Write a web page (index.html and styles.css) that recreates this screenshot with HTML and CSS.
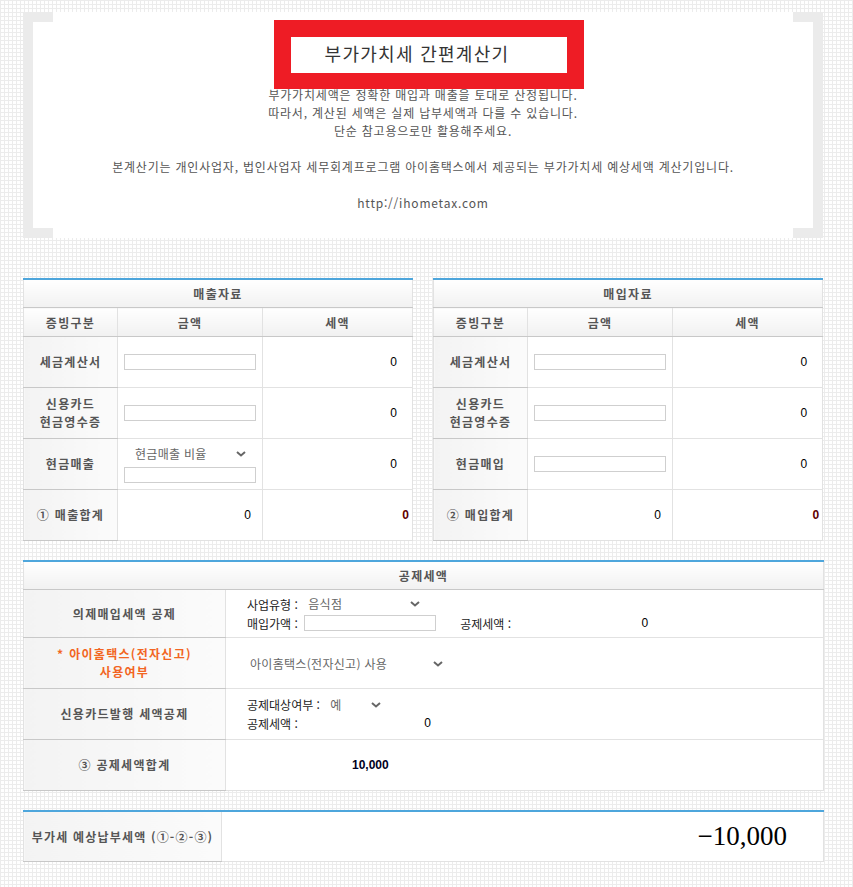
FILE: index.html
```html
<!DOCTYPE html>
<html lang="ko">
<head>
<meta charset="utf-8">
<title>부가가치세 간편계산기</title>
<link rel="stylesheet" href="styles.css">
</head>
<body>
<div class="page">
  <div class="intro">
    <span class="bracket bracket-left"></span>
    <span class="bracket bracket-right"></span>
    <div class="highlight"></div>
    <h1 class="title">부가가치세 간편계산기</h1>
    <p class="desc">부가가치세액은 정확한 매입과 매출을 토대로 산정됩니다.<br>따라서, 계산된 세액은 실제 납부세액과 다를 수 있습니다.<br>단순 참고용으로만 활용해주세요.<br><br>본계산기는 개인사업자, 법인사업자 세무회계프로그램 아이홈택스에서 제공되는 부가가치세 예상세액 계산기입니다.<br><br>http://ihometax.com</p>
  </div>

  <div class="pair">
    <table class="grid">
      <colgroup><col class="c1"><col class="c2"><col class="c3"></colgroup>
      <tr><th colspan="3" class="cap">매출자료</th></tr>
      <tr class="heads"><th>증빙구분</th><th>금액</th><th>세액</th></tr>
      <tr><th class="lab">세금계산서</th><td class="in"><input class="box" type="text"></td><td class="num">0</td></tr>
      <tr><th class="lab">신용카드<br>현금영수증</th><td class="in"><input class="box" type="text"></td><td class="num">0</td></tr>
      <tr><th class="lab">현금매출</th><td class="in"><span class="sel sel-ratio"><select><option>현금매출 비율</option></select><svg class="chev" width="10" height="6" viewBox="0 0 10 6"><path d="M1 1l4 3.5L9 1" fill="none" stroke="#666" stroke-width="2"/></svg></span><input class="box" type="text"></td><td class="num">0</td></tr>
      <tr><th class="lab">① 매출합계</th><td class="num num-sum">0</td><td class="num num-total">0</td></tr>
    </table>

    <table class="grid">
      <colgroup><col class="c1"><col class="c2"><col class="c3"></colgroup>
      <tr><th colspan="3" class="cap">매입자료</th></tr>
      <tr class="heads"><th>증빙구분</th><th>금액</th><th>세액</th></tr>
      <tr><th class="lab">세금계산서</th><td class="in"><input class="box" type="text"></td><td class="num">0</td></tr>
      <tr><th class="lab">신용카드<br>현금영수증</th><td class="in"><input class="box" type="text"></td><td class="num">0</td></tr>
      <tr><th class="lab">현금매입</th><td class="in"><input class="box" type="text"></td><td class="num">0</td></tr>
      <tr><th class="lab">② 매입합계</th><td class="num num-sum">0</td><td class="num num-total">0</td></tr>
    </table>
  </div>

  <table class="grid wide deduct">
    <colgroup><col class="w1"><col class="w2"></colgroup>
    <tr><th colspan="2" class="cap">공제세액</th></tr>
    <tr class="r48"><th class="lab">의제매입세액 공제</th>
      <td class="opts">
        <div class="line">사업유형 : <span class="sel sel-biz"><select><option>음식점</option></select><svg class="chev" width="10" height="6" viewBox="0 0 10 6"><path d="M1 1l4 3.5L9 1" fill="none" stroke="#666" stroke-width="2"/></svg></span></div>
        <div class="line">매입가액 : <input class="box box-buy" type="text"><span class="gap-label">공제세액 :</span><span class="val val-a">0</span></div>
      </td></tr>
    <tr><th class="lab lab-warn">* 아이홈택스(전자신고)<br>사용여부</th>
      <td class="opts"><span class="sel sel-use"><select><option>아이홈택스(전자신고) 사용</option></select><svg class="chev" width="10" height="6" viewBox="0 0 10 6"><path d="M1 1l4 3.5L9 1" fill="none" stroke="#666" stroke-width="2"/></svg></span></td></tr>
    <tr><th class="lab">신용카드발행 세액공제</th>
      <td class="opts">
        <div class="line">공제대상여부 : <span class="sel sel-yes"><select><option>예</option></select><svg class="chev" width="10" height="6" viewBox="0 0 10 6"><path d="M1 1l4 3.5L9 1" fill="none" stroke="#666" stroke-width="2"/></svg></span></div>
        <div class="line">공제세액 :<span class="val val-b">0</span></div>
      </td></tr>
    <tr><th class="lab">③ 공제세액합계</th><td class="sum-deduct">10,000</td></tr>
  </table>

  <table class="grid wide final">
    <colgroup><col class="f1"><col class="f2"></colgroup>
    <tr><th class="lab lab-final">부가세 예상납부세액 (①-②-③)</th><td class="big">−10,000</td></tr>
  </table>
</div>
</body>
</html>
```

FILE: styles.css
```css
html, body {
  margin: 0;
  padding: 0;
}
body {
  background-color: #fff;
  background-image:
    linear-gradient(to right, #ececec 1px, transparent 1px),
    linear-gradient(to bottom, #ececec 1px, transparent 1px);
  background-size: 4px 4px;
  font-family: "Noto Sans CJK KR", "Noto Sans", sans-serif;
  font-size: 12px;
  color: #555;
}
.page {
  width: 800px;
  margin-left: 23px;
  padding-top: 12px;
  padding-bottom: 25px;
}
.intro {
  position: relative;
  background: #fff;
  height: 226px;
  box-sizing: border-box;
  text-align: center;
}
.bracket {
  position: absolute;
  top: 0;
  bottom: 0;
  width: 20px;
  border: 10px solid #ebebeb;
}
.bracket-left { left: 0; border-right: 0; }
.bracket-right { right: 0; border-left: 0; }
.highlight {
  position: absolute;
  left: 251px;
  top: 8px;
  width: 276px;
  height: 36px;
  border: 17px solid #ee1c25;
  border-bottom-width: 16px;
  z-index: 2;
}
.title {
  position: relative;
  z-index: 3;
  margin: 0;
  padding-top: 29px;
  padding-right: 12px;
  height: 45px;
  line-height: 24px;
  font-size: 18px;
  font-weight: normal;
  letter-spacing: 1.3px;
  color: #333;
}
.desc {
  margin: 0;
  line-height: 18px;
  letter-spacing: 0.8px;
  color: #555;
}

.pair {
  display: flex;
  gap: 20px;
  margin-top: 40px;
}
.grid {
  border-collapse: collapse;
  table-layout: fixed;
  width: 389px;
  border-top: 2px solid #4ea6dc;
  background: #fff;
}
.grid th, .grid td {
  border: 1px solid #e2e2e2;
  padding: 0;
  font-size: 12px;
}
.grid th {
  font-weight: bold;
  letter-spacing: 1.3px;
  color: #555;
  background: linear-gradient(#ffffff, #f1f1f1);
}
.c1 { width: 94px; }
.c2 { width: 145px; }
.c3 { width: 150px; }
.cap {
  height: 27px;
  border-bottom-color: #c8c8c8 !important;
}
.heads th {
  height: 28px;
  border-bottom-color: #c8c8c8;
}
.grid tr > .lab {
  height: 50px;
  line-height: 18px;
  border-bottom-color: #c8c8c8;
  background: linear-gradient(to right, #f3f3f3, #fbfbfb);
}
.in {
  padding-left: 6px !important;
}
.box {
  display: block;
  box-sizing: border-box;
  width: 132px;
  height: 16px;
  margin: 0;
  padding: 0 2px;
  border: 1px solid #cfcfcf;
  font-size: 12px;
}
.num {
  text-align: right;
  padding-right: 15px !important;
  font-family: "Liberation Sans", sans-serif;
  color: #000;
}
.num-sum { padding-right: 11px !important; }
.num-total {
  padding-right: 3px !important;
  font-weight: bold;
  color: #600000;
}
.sel {
  display: inline-flex;
  align-items: center;
}
.sel select {
  appearance: none;
  -webkit-appearance: none;
  border: 0;
  background: transparent;
  font-family: "Noto Sans CJK KR", sans-serif;
  font-size: 12px;
  letter-spacing: 0.3px;
  color: #666;
  margin: 0;
  height: 18px;
  line-height: 18px;
}
.sel .chev {
  margin-left: -14px;
}
.sel-ratio {
  margin-bottom: 4px;
  margin-top: -2px;
}
.sel-ratio select { width: 126px; padding: 0 0 0 11px; }
.sel-biz select { width: 123px; padding: 0 0 0 7px; }
.sel-use select { width: 200px; padding: 0 0 0 3px; }
.sel-yes select { width: 62px; padding: 0 0 0 7px; }

.wide { width: 800px; }
.deduct { margin-top: 19px; }
.w1 { width: 202px; }
.w2 { width: 598px; }
.deduct tr > .lab {
  height: 50px;
}
.deduct .r48 > .lab { height: 47px; }
.lab-warn { color: #f26522 !important; }
.opts {
  padding-left: 21px !important;
  color: #222;
  line-height: 19px;
}
.line {
  display: flex;
  align-items: center;
  white-space: pre;
}
.box-buy {
  display: inline-block;
  margin-left: 3px;
}
.gap-label { margin-left: 24px; }
.val {
  display: inline-block;
  text-align: right;
  font-family: "Liberation Sans", sans-serif;
  color: #000;
}
.val-a { width: 137px; }
.val-b { width: 133px; }
.sum-deduct {
  padding-left: 126px !important;
  font-family: "Liberation Sans", sans-serif;
  font-weight: bold;
  color: #000022;
}
.final { margin-top: 19px; }
.f1 { width: 198px; }
.f2 { width: 602px; }
.lab-final {
  height: 49px !important;
  letter-spacing: 1.2px !important;
  padding: 0 !important;
  white-space: nowrap;
}
.big {
  text-align: right;
  padding-right: 36px !important;
  font-family: "Liberation Serif", serif;
  font-size: 27px !important;
  color: #000;
}
```
